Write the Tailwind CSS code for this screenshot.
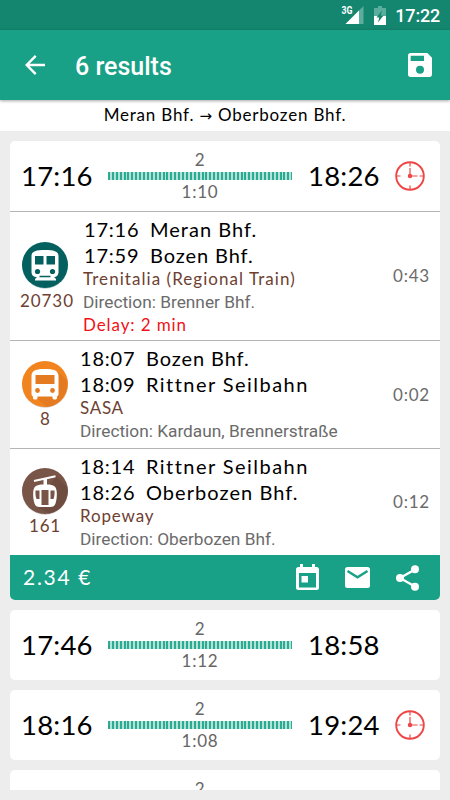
<!DOCTYPE html>
<html lang="en">
<head>
  <meta charset="UTF-8" />
  <meta name="viewport" content="width=device-width, initial-scale=1.0"/>
  <title>6 results</title>
  <script src="https://cdn.jsdelivr.net/npm/@tailwindcss/browser@4"></script>
</head>
<body class="w-[450px] h-[800px] overflow-hidden bg-[#ededed] font-['Lato',sans-serif] text-black">
  <!-- shared icons -->
  <svg class="hidden">
    <symbol id="clock" viewBox="0 0 30 30">
      <g fill="none" stroke="#ee4546">
        <circle cx="15" cy="15" r="13.8" stroke-width="1.9"/>
        <path stroke-width="1.2" d="M15 2v3.5M15 24.5V28M2 15h3.5M24.5 15H28M15 7v8h7.5"/>
      </g>
      <circle cx="15" cy="15" r="2.2" fill="#ee4546"/>
    </symbol>
  </svg>

  <!-- status bar -->
  <div class="h-[30px] bg-[#14866f] flex items-center justify-end pr-[10px] text-white font-['Roboto',sans-serif]">
    <svg class="w-6 h-5" viewBox="0 0 24 20">
      <path d="M23.5 1v18H5.5z" fill="#5bae9d"/>
      <path d="M19 5.5V19H5.5z" fill="#fff"/>
      <path d="M0 0h12v10.5H0z" fill="#14866f"/>
      <text x="1.500" y="9.300" class="font-['Roboto',sans-serif] text-[10px] font-bold" textLength="11" lengthAdjust="spacingAndGlyphs" fill="#fff">3G</text>
    </svg>
    <svg class="w-3 h-[19px] ml-[10px]" viewBox="0 0 12 19">
      <path d="M4 0h4v2h4v8H0V2h4z" fill="#5bae9d"/>
      <path d="M0 10h12v9H0z" fill="#fff"/>
      <path d="M8 4.5L2.5 11.5h2.8L4 16.5l5.5-7H6.7z" fill="#14866f"/>
    </svg>
    <span class="text-[18px] font-medium leading-none ml-[9px] tracking-[-0.2px] pt-[2px]">17:22</span>
  </div>

  <!-- app bar -->
  <div class="relative h-[70px] bg-[#18a186] flex items-center pl-[25px] pr-[18px] text-white shadow-[0_1px_3px_rgba(0,0,0,0.35)]">
    <svg class="w-5 h-5" viewBox="0 0 20 20" fill="none" stroke="#fff" stroke-width="2.4"><path d="M20 10H2M10.7 .9L1.7 10l9 9.1"/></svg>
    <h1 class="ml-[30px] font-['Roboto',sans-serif] font-medium text-[25px] leading-none pt-[3px]">6 results</h1>
    <svg class="w-6 h-6 ml-auto" viewBox="3 3 18 18" fill="#fff"><path d="M17.5 3H5a2 2 0 0 0-2 2v14a2 2 0 0 0 2 2h14a2 2 0 0 0 2-2V6.5zM12 18.500a3 3 0 1 1 0-6 3 3 0 0 1 0 6zM15 9H5V5h10z"/></svg>
  </div>
  <div class="h-[31px] bg-white text-center text-[17px] leading-[30px] tracking-[0.8px]">Meran Bhf. <span class="font-['DejaVu_Sans',sans-serif] text-[15px]">→</span> Oberbozen Bhf.</div>

  <!-- results -->
  <main class="mt-[10px] mx-[10px] h-[649px] overflow-hidden flex flex-col gap-[10px]">
    <section class="shrink-0 rounded-[5px] overflow-hidden bg-white">
      <div class="h-[70px] flex items-center px-[11px]">
        <span class="w-[75px] text-[27.500px] leading-none tracking-[0.2px] whitespace-nowrap">17:16</span>
        <div class="w-[184px] ml-[12px] text-center text-[17px] text-[#666] leading-[18px] tracking-[0.8px]">
          <div>2</div>
          <div class="h-2 my-[3px] bg-[repeating-linear-gradient(90deg,#2bab92_0_2px,#b5e2d8_2px_3.9px)]"></div>
          <div>1:10</div>
        </div>
        <span class="w-[75px] ml-[16px] text-[27.500px] leading-none tracking-[0.2px] whitespace-nowrap">18:26</span>
        <svg class="w-[30px] h-[30px] ml-[12px]"><use href="#clock"/></svg>
      </div>

      <div class="flex border-t border-[#b5b5b5] h-[129px]">
        <div class="w-[70px] shrink-0 flex flex-col items-center pt-[30px]">
          <svg class="w-[46px] h-[47px]" viewBox="0 0 46 47">
            <circle cx="23" cy="24" r="22.8" fill="#b9cfcf"/>
            <circle cx="23" cy="23" r="23" fill="#04605e"/>
            <path d="M9.5 14c0-5 5-6 13.5-6s13.5 1 13.5 6v16c0 3-2 5-4.5 5l2 2v1.5H13V37l2-2c-3.500 0-5.500-2-5.500-5z" fill="#fff"/>
            <path d="M13 14h8.500v8.500H13zM24.500 14H33v8.500h-8.500z" fill="#04605e"/>
            <circle cx="15.5" cy="29.5" r="2.6" fill="#04605e"/><circle cx="30.5" cy="29.5" r="2.6" fill="#04605e"/>
            <path d="M17.5 34.5h11" stroke="#04605e" stroke-width="1.5"/>
          </svg>
          <span class="mt-[2px] text-[17px] leading-[20px] tracking-[0.9px] text-[#6d4032] ml-[4px]">20730</span>
        </div>
        <div class="pl-[4px] pt-[4px] flex-1 text-[20px] leading-[26px] whitespace-nowrap">
          <div class="flex tracking-[1px]"><span class="w-[66px] tracking-[0.8px]">17:16</span>Meran Bhf.</div>
          <div class="flex tracking-[0.9px]"><span class="w-[66px] tracking-[0.8px]">17:59</span>Bozen Bhf.</div>
          <div class="text-[17px] leading-[22px] tracking-[1.05px] text-[#6d4032] -ml-px">Trenitalia (Regional Train)</div>
          <div class="font-['Roboto',sans-serif] text-[17.300px] leading-[24px] text-[#6b6b6b] -ml-px">Direction: Brenner Bhf.</div>
          <div class="text-[17px] leading-[21px] tracking-[0.9px] text-[#ef1219] -ml-px">Delay: 2 min</div>
        </div>
        <span class="self-center pr-[10px] text-[17px] tracking-[0.8px] text-[#6b6b6b]">0:43</span>
      </div>

      <div class="flex border-t border-[#b5b5b5] h-[108px]">
        <div class="w-[70px] shrink-0 flex flex-col items-center pt-[20px]">
          <svg class="w-[46px] h-[47px]" viewBox="0 0 46 47">
            <circle cx="23" cy="24" r="22.8" fill="#cfc7c0"/>
            <circle cx="23" cy="23" r="23" fill="#f28420"/>
            <path d="M36 10.5l8.500 8.500A23 23 0 0 1 25 46L12 35z" fill="#e47b20"/>
            <path d="M9.5 15c0-6 5-7 13.500-7s13.500 1 13.500 7v18c0 1-.5 2-1.500 2.500V37c0 2-4.500 2-4.500 0v-1.500h-15V37c0 2-4.500 2-4.500 0v-1.500c-1-.5-1.500-1.500-1.500-2.500z" fill="#fff"/>
            <path d="M13.5 14h19v9h-19z" fill="#e47b20"/>
            <circle cx="15.5" cy="29.5" r="2.4" fill="#e47b20"/><circle cx="30.5" cy="29.5" r="2.4" fill="#e47b20"/>
          </svg>
          <span class="mt-px text-[17px] leading-[20px] text-[#6d4032]">8</span>
        </div>
        <div class="pt-[4px] flex-1 text-[20px] leading-[26px] whitespace-nowrap">
          <div class="flex tracking-[0.9px]"><span class="w-[66px] tracking-[0.8px]">18:07</span>Bozen Bhf.</div>
          <div class="flex tracking-[1.45px]"><span class="w-[66px] tracking-[0.8px]">18:09</span>Rittner Seilbahn</div>
          <div class="text-[17px] leading-[22px] tracking-[0.7px] text-[#6d4032]">SASA</div>
          <div class="font-['Roboto',sans-serif] text-[17.300px] leading-[25px] text-[#6b6b6b]">Direction: Kardaun, Brennerstraße</div>
        </div>
        <span class="self-center pr-[10px] text-[17px] tracking-[0.8px] text-[#6b6b6b]">0:02</span>
      </div>

      <div class="flex border-t border-[#b5b5b5] h-[107px]">
        <div class="w-[70px] shrink-0 flex flex-col items-center pt-[19px]">
          <svg class="w-[46px] h-[47px]" viewBox="0 0 46 47">
            <circle cx="23" cy="24" r="22.8" fill="#c9c0bd"/>
            <circle cx="23" cy="23" r="23" fill="#795548"/>
            <path d="M34 8l11 11A23 23 0 0 1 27 45.600L14 38z" fill="#6f4c40"/>
            <path d="M12 13L33.500 8.300" stroke="#fff" stroke-width="2"/>
            <path d="M21.500 10.500h3.500v6c7 0 9.500 2 9.800 8 .2 4-.3 8-1.300 11-.8 2.500-2.500 3.500-5 3.500h-11c-2.500 0-4.200-1-5-3.500-1-3-1.500-7-1.300-11 .3-6 2.800-8 10.300-8z" fill="#fff"/>
            <path d="M19.500 22h7v15h-7zM13.500 22.500h4v8.500h-3c-1-2.500-1.200-5.500-1-8.500zM28.500 22.500h4c.2 3 0 6-1 8.500h-3z" fill="#795548"/>
          </svg>
          <span class="mt-px text-[17px] leading-[20px] tracking-[0.8px] text-[#6d4032]">161</span>
        </div>
        <div class="pt-[4px] flex-1 text-[20px] leading-[26px] whitespace-nowrap">
          <div class="flex tracking-[1.45px]"><span class="w-[66px] tracking-[0.8px]">18:14</span>Rittner Seilbahn</div>
          <div class="flex tracking-[1.05px]"><span class="w-[66px] tracking-[0.8px]">18:26</span>Oberbozen Bhf.</div>
          <div class="text-[17px] leading-[22px] tracking-[0.85px] text-[#6d4032]">Ropeway</div>
          <div class="font-['Roboto',sans-serif] text-[17.300px] leading-[25px] text-[#6b6b6b]">Direction: Oberbozen Bhf.</div>
        </div>
        <span class="self-center pr-[10px] text-[17px] tracking-[0.8px] text-[#6b6b6b]">0:12</span>
      </div>

      <div class="h-[45px] bg-[#18a186] text-white flex items-center pl-[13px] pr-[21px]">
        <span class="text-[21px] tracking-[1.7px] mr-auto pb-[2px]">2.34 €</span>
        <svg class="w-[23px] h-[26px] mb-[2px]" viewBox="0 0 23 26" fill="#fff"><path fill-rule="evenodd" d="M4 0h3v3h9V0h3v3h1.500A2.500 2.500 0 0 1 23 5.500v18a2.500 2.500 0 0 1-2.500 2.500h-18A2.500 2.500 0 0 1 0 23.500v-18A2.500 2.500 0 0 1 2.500 3H4zM3 9v14.500h17V9z"/><path d="M5.500 12h6.500v6.500H5.500z"/></svg>
        <svg class="w-[25px] h-[21px] ml-[26px]" viewBox="0 0 25 21"><rect width="25" height="21" rx="2.500" fill="#fff"/><path d="M2.500 4l10 6.300L22.500 4" fill="none" stroke="#18a186" stroke-width="2.400"/></svg>
        <svg class="w-[23px] h-[26px] ml-[26px]" viewBox="0 0 23 26" fill="#fff"><path d="M4 13l15-8.500M4 13l15 8.500" stroke="#fff" stroke-width="2.400"/><circle cx="4" cy="13" r="4"/><circle cx="19" cy="4.300" r="4"/><circle cx="19" cy="21.700" r="4"/></svg>
      </div>
    </section>

    <section class="shrink-0 h-[70px] rounded-[5px] bg-white flex items-center px-[11px]">
      <span class="w-[75px] text-[27.500px] leading-none tracking-[0.2px] whitespace-nowrap">17:46</span>
      <div class="w-[184px] ml-[12px] text-center text-[17px] text-[#666] leading-[18px] tracking-[0.8px]">
        <div>2</div>
        <div class="h-2 my-[3px] bg-[repeating-linear-gradient(90deg,#2bab92_0_2px,#b5e2d8_2px_3.9px)]"></div>
        <div>1:12</div>
      </div>
      <span class="w-[75px] ml-[16px] text-[27.500px] leading-none tracking-[0.2px] whitespace-nowrap">18:58</span>
    </section>

    <section class="shrink-0 h-[70px] rounded-[5px] bg-white flex items-center px-[11px]">
      <span class="w-[75px] text-[27.500px] leading-none tracking-[0.2px] whitespace-nowrap">18:16</span>
      <div class="w-[184px] ml-[12px] text-center text-[17px] text-[#666] leading-[18px] tracking-[0.8px]">
        <div>2</div>
        <div class="h-2 my-[3px] bg-[repeating-linear-gradient(90deg,#2bab92_0_2px,#b5e2d8_2px_3.9px)]"></div>
        <div>1:08</div>
      </div>
      <span class="w-[75px] ml-[16px] text-[27.500px] leading-none tracking-[0.2px] whitespace-nowrap">19:24</span>
      <svg class="w-[30px] h-[30px] ml-[12px]"><use href="#clock"/></svg>
    </section>

    <!-- next result, scrolled partly out of view -->
    <section class="shrink-0 h-[70px] rounded-[5px] bg-white flex items-start px-[11px] pt-[10px]">
      <div class="w-[184px] ml-[87px] text-center text-[17px] text-[#666] leading-[18px] tracking-[0.8px]">2</div>
    </section>
  </main>
</body>
</html>
